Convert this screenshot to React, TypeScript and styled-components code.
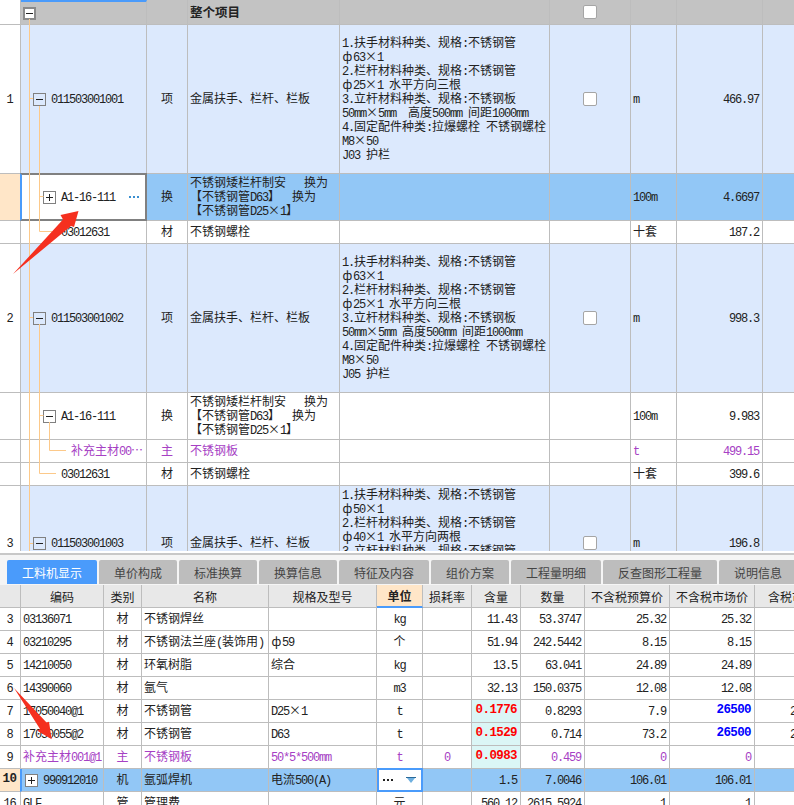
import React from "react";
import styled, { createGlobalStyle, css } from "styled-components";

const BORDER = "#bdbdbd";
const BLUE = "#4a9bfb";
const PURPLE = "#a640c4";
const LIGHT = "#dce9fd";
const SEL = "#92c7f6";
const ORANGE = "#ffe6c8";

const Global = createGlobalStyle`
  html, body { margin: 0; padding: 0; background: #fff; }
  body { overflow: hidden; font-family: "Noto Sans CJK SC", "Liberation Sans", sans-serif; }
`;

const Page = styled.div`
  position: relative;
  width: 794px;
  height: 805px;
  overflow: hidden;
  display: flex;
  flex-direction: column;
  color: #222;
  font-size: 12px;
  line-height: 14px;
`;

const TopPane = styled.div`
  position: relative;
  height: 551px;
  flex: none;
  overflow: hidden;
`;

const Row = styled.div<{ $cols: string; $h: number; $bg?: string }>`
  display: grid;
  flex: none;
  grid-template-columns: ${(p) => p.$cols};
  height: ${(p) => p.$h}px;
  background: ${(p) => p.$bg || "#fff"};
`;

const Cell = styled.div<{ $align?: string; $bg?: string; $color?: string; $bold?: boolean; $top?: boolean; $pad?: number }>`
  display: flex;
  min-width: 0;
  flex-direction: column;
  justify-content: ${(p) => (p.$top ? "flex-start" : "center")};
  align-items: ${(p) => (p.$align === "right" ? "flex-end" : p.$align === "center" ? "center" : "flex-start")};
  padding: ${(p) => (p.$top ? "1px" : "0")} ${(p) => (p.$align === "right" ? 3 : 0)}px 2px ${(p) => p.$pad ?? 2}px;
  border-right: 1px solid ${BORDER};
  border-bottom: 1px solid ${BORDER};
  overflow: hidden;
  white-space: pre;
  box-sizing: border-box;
  ${(p) => p.$bg && `background: ${p.$bg};`}
  ${(p) => p.$color && `color: ${p.$color};`}
  ${(p) => p.$bold && "font-weight: 700;"}
`;

const NoCell = styled(Cell)`
  align-items: center;
  padding: 0 1px 2px 0;
  background: ${(p) => p.$bg || "#fff"};
`;

const CodeCell = styled(Cell)<{ $indent: number; $selected?: boolean; $topBar?: boolean }>`
  flex-direction: row;
  justify-content: flex-start;
  align-items: center;
  padding-left: ${(p) => p.$indent}px;
  ${(p) => p.$topBar && `border-top: 2px solid ${BLUE};`}
  ${(p) =>
    p.$selected &&
    css`
      position: relative;
      z-index: 1;
      margin: -1px 0 0 -1px;
      border: 2px solid #808080;
      border-left-color: ${BLUE};
      background: #fff;
    `}
`;

const ActiveCode = styled(CodeCell)`
  margin-left: -1px;
  padding-left: 3px;
  border-left: 2px solid ${BLUE};
`;

const Toggle = styled.span<{ $open?: boolean; $strong?: boolean; $fill?: boolean }>`
  position: relative;
  flex: none;
  width: 13px;
  height: 13px;
  margin: 2px 5px 0 0;
  box-sizing: border-box;
  border: ${(p) => (p.$strong ? 2 : 1)}px solid ${(p) => (p.$strong ? "#8a8a8a" : "#808080")};
  background: ${(p) => (p.$strong || p.$fill ? "#fff" : "transparent")};
  &::before {
    content: "";
    position: absolute;
    left: 50%;
    top: 50%;
    width: 7px;
    height: 1px;
    margin: -0.5px 0 0 -3.5px;
    background: #222;
  }
  &::after {
    content: "";
    display: ${(p) => (p.$open ? "none" : "block")};
    position: absolute;
    left: 50%;
    top: 50%;
    width: 1px;
    height: 7px;
    margin: -3.5px 0 0 -0.5px;
    background: #222;
  }
`;

const Dots = styled.span<{ $dark?: boolean }>`
  width: 2px;
  height: 2px;
  flex: none;
  background: ${(p) => (p.$dark ? "#222" : "#3a8fd0")};
  box-shadow: 4px 0 ${(p) => (p.$dark ? "#222" : "#3a8fd0")}, 8px 0 ${(p) => (p.$dark ? "#222" : "#3a8fd0")};
`;

const SelDots = styled(Dots)`
  margin: 2px 14px 0 auto;
`;

const Check = styled.span`
  width: 14px;
  height: 14px;
  margin-top: 2px;
  box-sizing: border-box;
  border: 1px solid #a5a5a5;
  border-radius: 2px;
  background: #fff;
`;

const Line = styled.span`
  display: block;
  flex: none;
  height: 14px;
  line-height: 14px;
`;

const Lat = styled.span`
  font-family: "Liberation Mono", monospace;
  font-size: 12px;
  line-height: 1;
  letter-spacing: -1.2px;
`;

const BoldLat = styled.span<{ $c?: string }>`
  font-family: "Liberation Mono", monospace;
  font-size: 12.5px;
  font-weight: 700;
  line-height: 1;
  letter-spacing: -0.6px;
  ${(p) => p.$c && `color: ${p.$c};`}
`;

const Phi = styled.span`
  display: inline-block;
  width: 11px;
  text-align: center;
`;

const Mixed = ({ t }: { t: string }) => (
  <Line>
    {t.split(/([\x20-\x7e]+|ф)/).map((s, i) =>
      i % 2 === 0 ? s : s === "ф" ? <Phi key={i}>{s}</Phi> : <Lat key={i}>{s}</Lat>
    )}
  </Line>
);

const Strong = styled.span`
  margin-top: 2px;
  font-size: 12.5px;
  font-weight: 700;
`;

const StripLine = styled.div`
  height: 2px;
  margin-top: 2px;
  background: #c8c8c8;
  flex: none;
`;

const Tabs = styled.div`
  display: flex;
  gap: 2px;
  padding: 5px 0 1px 7px;
  background: #f5f5f5;
  flex: none;
`;

const Tab = styled.div<{ $w: number; $active?: boolean }>`
  flex: none;
  width: ${(p) => p.$w}px;
  height: 24px;
  padding-top: 2px;
  box-sizing: border-box;
  display: flex;
  align-items: center;
  justify-content: center;
  border-radius: 2px 2px 0 0;
  background: ${(p) => (p.$active ? BLUE : "#bdbdbd")};
  color: ${(p) => (p.$active ? "#fff" : "#444")};
`;

const HeadCell = styled(Cell)<{ $on?: boolean }>`
  align-items: center;
  padding: 1px 0 0;
  background: ${(p) => (p.$on ? ORANGE : "#e8e8e8")};
  font-weight: ${(p) => (p.$on ? 700 : 400)};
  ${(p) => p.$on && `border-bottom: 2px solid ${BLUE};`}
`;

const UnitEdit = styled(Cell)`
  position: relative;
  z-index: 1;
  flex-direction: row;
  align-items: center;
  justify-content: space-between;
  margin-top: -1px;
  padding: 0 5px 0 4px;
  border: 2px solid ${BLUE};
  background: #fff;
`;

const Overlay = styled.svg`
  position: absolute;
  left: 0;
  top: 0;
  z-index: 2;
  pointer-events: none;
`;

const topCols = "21px 126px 41px 152px 210px 81px 46px 86px 60px";
const bottomCols = "21px 83px 38px 127px 108px 46px 49px 49px 64px 85px 85px 87px";

const desc = (a: string, b: string, c: string, d: string) => [
  "1.扶手材料种类、规格:不锈钢管",
  a,
  "2.栏杆材料种类、规格:不锈钢管",
  "ф25×1 水平方向三根",
  "3.立杆材料种类、规格:不锈钢板",
  b,
  "4.固定配件种类:拉爆螺栓 不锈钢螺栓",
  c,
  d,
];

type TopRow = {
  h: number; bg?: string; no?: string; code: string; indent: number; toggle?: "open" | "closed";
  type: string; name: string[]; desc?: string[]; check?: boolean; unit: string; qty: string;
  purple?: boolean; selected?: boolean; descTop?: boolean;
};

const topRows: TopRow[] = [
  { h: 149, bg: LIGHT, no: "1", code: "011503001001", indent: 12, toggle: "open", type: "项", name: ["金属扶手、栏杆、栏板"], desc: desc("ф63×1", "50mm×5mm  高度500mm 间距1000mm", "M8×50", "J03 护栏"), check: true, unit: "m", qty: "466.97" },
  { h: 47, bg: SEL, code: "A1-16-111", indent: 21, toggle: "closed", type: "换", name: ["不锈钢矮栏杆制安   换为", "【不锈钢管D63】  换为", "【不锈钢管D25×1】"], unit: "100m", qty: "4.6697", selected: true },
  { h: 23, code: "03012631", indent: 40, type: "材", name: ["不锈钢螺栓"], unit: "十套", qty: "187.2" },
  { h: 149, bg: LIGHT, no: "2", code: "011503001002", indent: 12, toggle: "open", type: "项", name: ["金属扶手、栏杆、栏板"], desc: desc("ф63×1", "50mm×5mm 高度500mm 间距1000mm", "M8×50", "J05 护栏"), check: true, unit: "m", qty: "998.3" },
  { h: 47, code: "A1-16-111", indent: 22, toggle: "open", type: "换", name: ["不锈钢矮栏杆制安   换为", "【不锈钢管D63】  换为", "【不锈钢管D25×1】"], unit: "100m", qty: "9.983" },
  { h: 23, code: "补充主材00…", indent: 50, type: "主", name: ["不锈钢板"], unit: "t", qty: "499.15", purple: true },
  { h: 23, code: "03012631", indent: 40, type: "材", name: ["不锈钢螺栓"], unit: "十套", qty: "399.6" },
  { h: 115, bg: LIGHT, no: "3", code: "011503001003", indent: 12, toggle: "open", type: "项", name: ["金属扶手、栏杆、栏板"], desc: ["1.扶手材料种类、规格:不锈钢管", "ф50×1", "2.栏杆材料种类、规格:不锈钢管", "ф40×1 水平方向两根", "3.立杆材料种类、规格:不锈钢管"], check: true, unit: "m", qty: "196.8", descTop: true },
];

const headers = ["", "编码", "类别", "名称", "规格及型号", "单位", "损耗率", "含量", "数量", "不含税预算价", "不含税市场价", "含税市场价"];

type Bold = { v: string; c: string };
type BottomRow = {
  no: string; code: string; type: string; name: string; spec: string; unit: string; loss?: string;
  amt: string | Bold; total: string; budget: string; market: string | Bold; tax?: string; purple?: boolean; hot?: boolean;
};

const red = (v: string): Bold => ({ v, c: "#ff0000" });
const blue = (v: string): Bold => ({ v, c: "#0000ff" });

const bottomRows: BottomRow[] = [
  { no: "3", code: "03136071", type: "材", name: "不锈钢焊丝", spec: "", unit: "kg", amt: "11.43", total: "53.3747", budget: "25.32", market: "25.32" },
  { no: "4", code: "03210295", type: "材", name: "不锈钢法兰座(装饰用)", spec: "ф59", unit: "个", amt: "51.94", total: "242.5442", budget: "8.15", market: "8.15" },
  { no: "5", code: "14210050", type: "材", name: "环氧树脂", spec: "综合", unit: "kg", amt: "13.5", total: "63.041", budget: "24.89", market: "24.89" },
  { no: "6", code: "14390060", type: "材", name: "氩气", spec: "", unit: "m3", amt: "32.13", total: "150.0375", budget: "12.08", market: "12.08" },
  { no: "7", code: "17050040@1", type: "材", name: "不锈钢管", spec: "D25×1", unit: "t", amt: red("0.1776"), total: "0.8293", budget: "7.9", market: blue("26500"), tax: "26500.00", hot: true },
  { no: "8", code: "17050055@2", type: "材", name: "不锈钢管", spec: "D63", unit: "t", amt: red("0.1529"), total: "0.714", budget: "73.2", market: blue("26500"), tax: "26500.00", hot: true },
  { no: "9", code: "补充主材001@1", type: "主", name: "不锈钢板", spec: "50*5*500mm", unit: "t", loss: "0", amt: red("0.0983"), total: "0.459", budget: "0", market: "0", purple: true, hot: true },
];

const Value = ({ d }: { d: string | Bold }) =>
  typeof d === "string" ? <Mixed t={d} /> : <BoldLat $c={d.c}>{d.v}</BoldLat>;

export default function App() {
  return (
    <Page>
      <Global />
      <TopPane>
        <Row $cols={topCols} $h={25} $bg="#c3c3c3">
          <NoCell $bg="#fff" />
          <CodeCell $indent={2} $topBar>
            <Toggle $open $strong />
          </CodeCell>
          <Cell />
          <Cell><Strong>整个项目</Strong></Cell>
          <Cell />
          <Cell $align="center" $pad={0}><Check /></Cell>
          <Cell />
          <Cell />
          <Cell />
        </Row>
        {topRows.map((r, i) => {
          const c = r.purple ? PURPLE : undefined;
          return (
            <Row key={i} $cols={topCols} $h={r.h} $bg={r.bg}>
              <NoCell $bg={r.selected ? ORANGE : "#fff"}><Mixed t={r.no || ""} /></NoCell>
              <CodeCell $indent={r.indent} $selected={r.selected} $color={c}>
                {r.toggle && <Toggle $open={r.toggle === "open"} />}
                <Mixed t={r.code} />
                {r.selected && <SelDots />}
              </CodeCell>
              <Cell $align="center" $pad={0} $color={c}>{r.type}</Cell>
              <Cell $color={c}>{r.name.map((n) => <Mixed key={n} t={n} />)}</Cell>
              <Cell $top={r.descTop}>{(r.desc || []).map((n, k) => <Mixed key={k} t={n} />)}</Cell>
              <Cell $align="center" $pad={0}>{r.check && <Check />}</Cell>
              <Cell $color={c}><Mixed t={r.unit} /></Cell>
              <Cell $align="right" $color={c}><Mixed t={r.qty} /></Cell>
              <Cell />
            </Row>
          );
        })}
      </TopPane>

      <StripLine />
      <Tabs>
        {[["工料机显示", 90], ["单价构成", 78], ["标准换算", 78], ["换算信息", 78], ["特征及内容", 90], ["组价方案", 78], ["工程量明细", 90], ["反查图形工程量", 114], ["说明信息", 78]].map(([t, w], i) => (
          <Tab key={t as string} $w={w as number} $active={i === 0}>{t}</Tab>
        ))}
      </Tabs>

      <Row $cols={bottomCols} $h={23}>
        {headers.map((h, i) => (
          <HeadCell key={i} $on={i === 5}>{h}</HeadCell>
        ))}
      </Row>
      {bottomRows.map((r) => {
        const c = r.purple ? PURPLE : undefined;
        return (
          <Row key={r.no} $cols={bottomCols} $h={23}>
            <NoCell><Mixed t={r.no} /></NoCell>
            <Cell $color={c}><Mixed t={r.code} /></Cell>
            <Cell $align="center" $pad={0} $color={c}>{r.type}</Cell>
            <Cell $color={c}><Mixed t={r.name} /></Cell>
            <Cell $color={c}><Mixed t={r.spec} /></Cell>
            <Cell $align="center" $pad={0} $color={c}><Mixed t={r.unit} /></Cell>
            <Cell $align="center" $pad={0} $color={c}><Mixed t={r.loss || ""} /></Cell>
            <Cell $align="right" $bg={r.hot ? "#dbf6f6" : undefined}><Value d={r.amt} /></Cell>
            <Cell $align="right" $color={c}><Mixed t={r.total} /></Cell>
            <Cell $align="right" $color={c}><Mixed t={r.budget} /></Cell>
            <Cell $align="right" $color={c}><Value d={r.market} /></Cell>
            <Cell $align="right"><Mixed t={r.tax || ""} /></Cell>
          </Row>
        );
      })}
      <Row $cols={bottomCols} $h={23} $bg={SEL}>
        <NoCell $bg={ORANGE}><BoldLat>10</BoldLat></NoCell>
        <ActiveCode $indent={3}>
          <Toggle $fill />
          <Mixed t="990912010" />
        </ActiveCode>
        <Cell $align="center" $pad={0}>机</Cell>
        <Cell>氩弧焊机</Cell>
        <Cell><Mixed t="电流500(A)" /></Cell>
        <UnitEdit>
          <Dots $dark />
          <svg width="10" height="6" viewBox="0 0 10 6">
            <path d="M0 0h10v1H0z" fill="#2a6a9a" />
            <path d="M1 1h8L5 6z" fill="#6fb0e0" />
          </svg>
        </UnitEdit>
        <Cell />
        <Cell $align="right"><Mixed t="1.5" /></Cell>
        <Cell $align="right"><Mixed t="7.0046" /></Cell>
        <Cell $align="right"><Mixed t="106.01" /></Cell>
        <Cell $align="right"><Mixed t="106.01" /></Cell>
        <Cell />
      </Row>
      <Row $cols={bottomCols} $h={23}>
        <NoCell><Mixed t="16" /></NoCell>
        <Cell><Mixed t="GLF" /></Cell>
        <Cell $align="center" $pad={0}>管</Cell>
        <Cell>管理费</Cell>
        <Cell />
        <Cell $align="center" $pad={0}>元</Cell>
        <Cell />
        <Cell $align="right"><Mixed t="560.12" /></Cell>
        <Cell $align="right"><Mixed t="2615.5924" /></Cell>
        <Cell $align="right"><Mixed t="1" /></Cell>
        <Cell $align="right"><Mixed t="1" /></Cell>
        <Cell />
      </Row>

      <Overlay width="794" height="551" viewBox="0 0 794 551" fill="none" stroke="#fcc98a">
        <path d="M29.5 19V551M30 98.5H33M39.5 106V231.5H52M40 196.5H43.5M30 317.5H33M39.5 324V473.5H56M40 415.5H43.5M49.5 422V450.5H66M30 543.5H33" />
      </Overlay>
      <Overlay width="794" height="805" viewBox="0 0 794 805" fill="#f5301f" stroke="none">
        <path d="M13 274L63 219.5L60.5 215L78.5 211L74 227L71 226Z" />
        <path d="M14 688L46.5 722.5L49 721.7L51.7 739.3L37.3 730.7L40 729Z" />
      </Overlay>
    </Page>
  );
}
